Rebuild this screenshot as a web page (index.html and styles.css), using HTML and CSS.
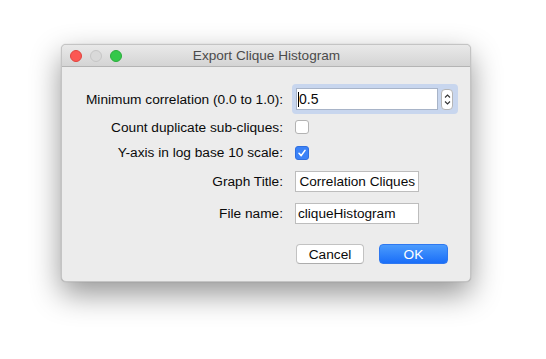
FILE: index.html
```html
<!DOCTYPE html>
<html lang="en">
<head>
  <meta charset="UTF-8">
  <meta name="viewport" content="width=device-width, initial-scale=1.0">
  <title>Export Clique Histogram</title>
  <link rel="stylesheet" href="styles.css">
</head>
<body>

  <div class="window">
    <!-- Title bar -->
    <div class="titlebar">
      <div class="lights">
        <span class="light red"></span>
        <span class="light gray"></span>
        <span class="light green"></span>
      </div>
      <div class="title">Export Clique Histogram</div>
    </div>

    <!-- Form -->
    <div class="content">
      <div class="form">
        <label class="label">Minimum correlation (0.0 to 1.0):</label>
        <div class="control">
          <div class="focus-ring">
            <div class="field field-num"><span class="caret"></span>0.5</div>
            <div class="spinner">
              <svg width="7" height="15" viewBox="0 0 7 15">
                <path d="M1 5.5 L3.5 3 L6 5.5" fill="none" stroke="#333" stroke-width="1.1"/>
                <path d="M1 9.5 L3.5 12 L6 9.5" fill="none" stroke="#333" stroke-width="1.1"/>
              </svg>
            </div>
          </div>
        </div>

        <label class="label">Count duplicate sub-cliques:</label>
        <div class="control">
          <span class="checkbox"></span>
        </div>

        <label class="label">Y-axis in log base 10 scale:</label>
        <div class="control">
          <span class="checkbox checked">
            <svg width="10" height="10" viewBox="0 0 10 10">
              <path d="M2 5.3 L4.2 7.6 L8 2.4" fill="none" stroke="#fff" stroke-width="1.6" stroke-linecap="round" stroke-linejoin="round"/>
            </svg>
          </span>
        </div>

        <label class="label">Graph Title:</label>
        <div class="control">
          <div class="field field-text scrolled"><span>s Correlation Cliques</span></div>
        </div>

        <label class="label">File name:</label>
        <div class="control">
          <div class="field field-text"><span>cliqueHistogram</span></div>
        </div>

        <div class="buttons">
          <button class="btn btn-cancel">Cancel</button>
          <button class="btn btn-ok">OK</button>
        </div>
      </div>
    </div>
  </div>

</body>
</html>
```

FILE: styles.css
```css
/* page */
html, body {
  height: 100%;
}

body {
  margin: 0;
  box-sizing: border-box;
  padding: 44px 0 0 61px;
  background-color: #fff;
  font-family: 'Liberation Sans', Arial, sans-serif;
  font-size: 13.7px;
  color: #0a0a0a;
}

/* window */
.window {
  width: 410px;
  height: 238px;
  box-sizing: border-box;
  border: 1px solid #c4c4c4;
  border-radius: 5px;
  background-color: #ececec;
  box-shadow: 0 12px 30px rgba(0, 0, 0, 0.42), 0 0 1px rgba(0, 0, 0, 0.3);
  overflow: hidden;
}

.titlebar {
  position: relative;
  height: 21px;
  background: linear-gradient(#e9e9e9, #d4d4d4);
  border-bottom: 1px solid #b4b4b4;
  display: flex;
  align-items: center;
  justify-content: center;
}

.lights {
  position: absolute;
  left: 8px;
  top: 5px;
  display: flex;
  gap: 8px;
}

.light {
  width: 12px;
  height: 12px;
  box-sizing: border-box;
  border-radius: 50%;
}

.red {
  background-color: #fc5753;
  border: 1px solid #e0443e;
}

.gray {
  background-color: #d9d9d9;
  border: 1px solid #c6c6c6;
}

.green {
  background-color: #34c84a;
  border: 1px solid #2aac3c;
}

.title {
  color: #4b4b4b;
  font-size: 13.6px;
  padding-left: 1px;
}

/* form */
.content {
  padding-top: 17px;
}

.form {
  display: grid;
  grid-template-columns: 221px 1fr;
  grid-template-rows: 30px 26px 25px 33px 30px auto;
  column-gap: 12px;
}

.label {
  text-align: right;
  align-self: center;
  white-space: nowrap;
}

.control {
  display: flex;
  align-items: center;
}

.focus-ring {
  margin-left: -3px;
  display: flex;
  align-items: center;
  gap: 3px;
  padding: 4px 5px 4px 4px;
  background-color: #c8d6ee;
  border-radius: 4px;
}

.field {
  box-sizing: border-box;
  background-color: #fff;
  border: 1px solid #bdbdbd;
  display: flex;
  align-items: center;
  white-space: nowrap;
  overflow: hidden;
}

.field-num {
  width: 142px;
  height: 22px;
  padding-left: 1px;
  font-size: 14px;
  border-color: #a8b4c8;
}

.caret {
  width: 1px;
  height: 15px;
  background-color: #000;
}

.spinner {
  width: 12px;
  height: 21px;
  box-sizing: border-box;
  background-color: #fff;
  border: 1px solid #b5b5b5;
  border-radius: 4px;
  display: flex;
  align-items: center;
  justify-content: center;
}

.field-text {
  width: 124px;
  height: 21px;
  padding: 0 3px 0 2px;
  font-size: 13.6px;
}

.scrolled {
  justify-content: flex-end;
}

.scrolled span {
  flex-shrink: 0;
}

.checkbox {
  width: 14px;
  height: 14px;
  box-sizing: border-box;
  background-color: #fff;
  border: 1px solid #b3b3b3;
  border-radius: 3px;
  display: flex;
  align-items: center;
  justify-content: center;
}

.checkbox.checked {
  background-color: #3b82f7;
  border-color: #2f6fe0;
}

/* buttons */
.buttons {
  grid-column: 2;
  margin-top: 16px;
  margin-left: 1px;
  display: flex;
  gap: 15px;
}

.btn {
  height: 20px;
  padding: 0;
  border-radius: 4px;
  font-family: 'Liberation Sans', Arial, sans-serif;
  font-size: 13.7px;
}

.btn-cancel {
  width: 68px;
  background-color: #fff;
  border: 1px solid #c2c2c2;
  border-bottom-color: #adadad;
  color: #0a0a0a;
}

.btn-ok {
  width: 69px;
  background: linear-gradient(#4b9bfd, #1a6ef8);
  border: 1px solid #2e78f0;
  color: #fff;
}
```
